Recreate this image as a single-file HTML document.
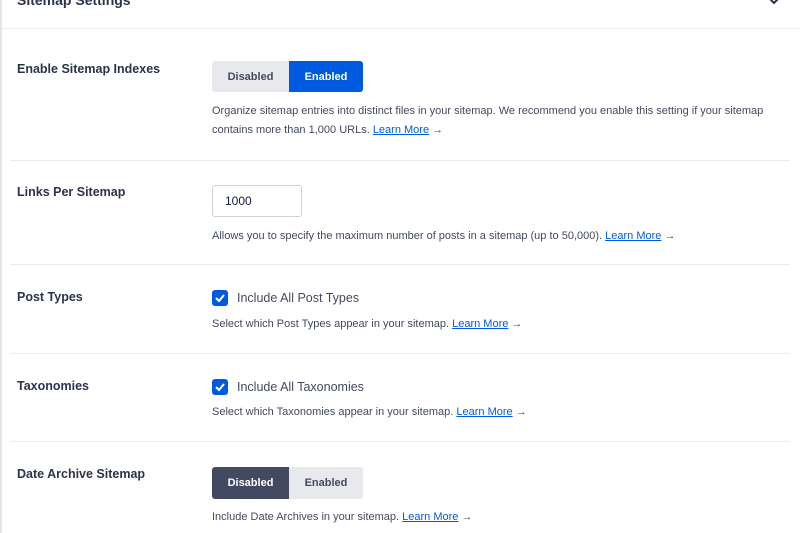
<!DOCTYPE html>
<html><head><style>
body{margin:0;width:800px;height:533px;overflow:hidden;background:#fff;font-family:"Liberation Sans",sans-serif;color:#141b38;position:relative}
.a{position:absolute}
.lbl{font-size:12.5px;font-weight:bold;color:#2c324c}
.desc{font-size:11px;color:#434960;line-height:19px;white-space:nowrap}
.desc a{color:#005ae0;text-decoration:underline}
.hr{position:absolute;left:10px;right:10px;height:1px;background:#ebecef}
.tg{position:absolute;height:31px;display:flex;font-size:11px;font-weight:bold;border-radius:3px;overflow:hidden}
.tg div{display:flex;align-items:center;justify-content:center}
.cb{position:absolute;width:16px;height:16px;background:#005ae0;border-radius:3px}
.ct{font-size:12.5px;color:#434960}
</style></head><body>
<div class="a" style="left:0;top:0;width:2px;height:533px;background:#e4e5e8"></div>
<div class="a" style="left:17px;top:-8px;font-size:14px;font-weight:bold;color:#2c324c">Sitemap Settings</div>
<svg class="a" style="left:767px;top:-4px" width="14" height="10"><path d="M2 2 L7 7 L12 2" stroke="#2c324c" stroke-width="2" fill="none"/></svg>
<div class="hr" style="top:28px;left:2px;right:0"></div>

<div class="a lbl" style="left:17px;top:62px">Enable Sitemap Indexes</div>
<div class="tg" style="left:212px;top:61px"><div style="width:77px;background:#e8e9ec;color:#434960">Disabled</div><div style="width:74px;background:#005ae0;color:#fff">Enabled</div></div>
<div class="a desc" style="left:212px;top:102px">Organize sitemap entries into distinct files in your sitemap. We recommend you enable this setting if your sitemap<br>contains more than 1,000 URLs. <a>Learn More</a> →</div>
<div class="hr" style="top:160px"></div>

<div class="a lbl" style="left:17px;top:185px">Links Per Sitemap</div>
<div class="a" style="left:212px;top:185px;border:1px solid #d0d1d7;border-radius:3px;font-size:12px;line-height:30px;padding-left:12px;box-sizing:border-box;width:90px;height:32px;color:#141b38">1000</div>
<div class="a desc" style="left:212px;top:227px">Allows you to specify the maximum number of posts in a sitemap (up to 50,000). <a>Learn More</a> →</div>
<div class="hr" style="top:264px"></div>

<div class="a lbl" style="left:17px;top:290px">Post Types</div>
<div class="cb" style="left:212px;top:290px"><svg width="16" height="16"><path d="M4 8 L7 11 L12 5" stroke="#fff" stroke-width="2" fill="none"/></svg></div>
<div class="a ct" style="left:237px;top:291px">Include All Post Types</div>
<div class="a desc" style="left:212px;top:315px">Select which Post Types appear in your sitemap. <a>Learn More</a> →</div>
<div class="hr" style="top:353px"></div>

<div class="a lbl" style="left:17px;top:379px">Taxonomies</div>
<div class="cb" style="left:212px;top:379px"><svg width="16" height="16"><path d="M4 8 L7 11 L12 5" stroke="#fff" stroke-width="2" fill="none"/></svg></div>
<div class="a ct" style="left:237px;top:380px">Include All Taxonomies</div>
<div class="a desc" style="left:212px;top:403px">Select which Taxonomies appear in your sitemap. <a>Learn More</a> →</div>
<div class="hr" style="top:441px"></div>

<div class="a lbl" style="left:17px;top:467px">Date Archive Sitemap</div>
<div class="tg" style="left:212px;top:467px;height:32px"><div style="width:77px;background:#434960;color:#fff">Disabled</div><div style="width:74px;background:#e8e9ec;color:#434960">Enabled</div></div>
<div class="a desc" style="left:212px;top:508px">Include Date Archives in your sitemap. <a>Learn More</a> →</div>
</body></html>
